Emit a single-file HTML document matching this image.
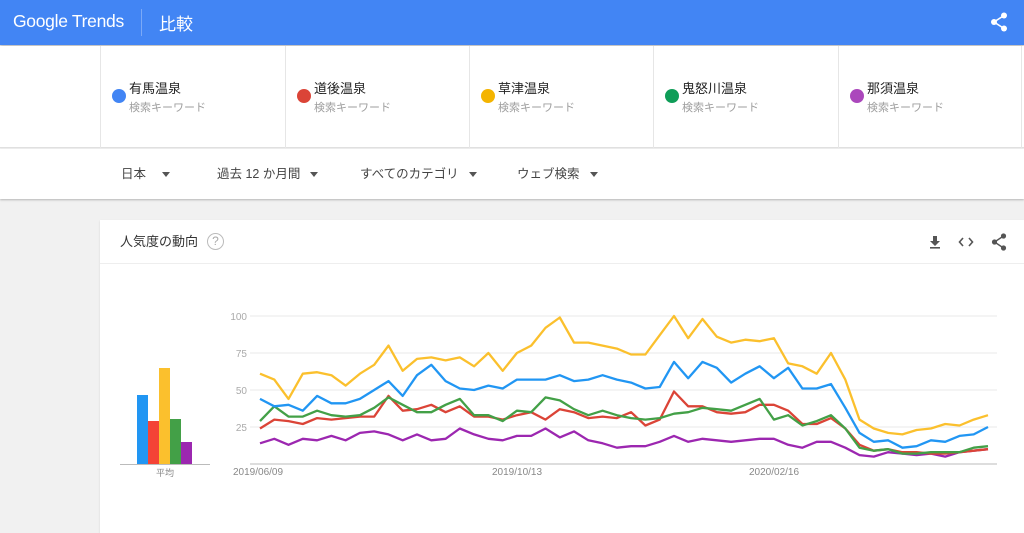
<!DOCTYPE html>
<html><head><meta charset="utf-8">
<style>
*{margin:0;padding:0;box-sizing:border-box}
body{width:1024px;height:533px;overflow:hidden;background:#f1f1f1;font-family:"Liberation Sans","Noto Sans CJK JP",sans-serif;position:relative}
.hdr{position:absolute;left:0;top:0;width:1024px;height:45px;background:#4285f4;box-shadow:0 1px 3px rgba(0,0,0,.3)}
.logo{position:absolute;left:13px;top:11px;color:#fff;font-size:17.5px;letter-spacing:-0.3px}
.sep{position:absolute;left:141px;top:9px;width:1px;height:27px;background:rgba(255,255,255,.3)}
.ttl{position:absolute;left:159px;top:10px;color:#fff;font-size:17px}
.kw{position:absolute;left:0;top:46px;width:1024px;height:102px;background:#fff;border-bottom:1px solid #e0e0e0}
.kc{position:absolute;top:0;height:102px;border-left:1px solid #e6e6e6}
.dot{position:absolute;left:11px;top:43px;width:14px;height:14px;border-radius:50%}
.kn{position:absolute;left:28px;top:32px;font-size:13px;color:#222}
.ks{position:absolute;left:28px;top:53px;font-size:11px;color:#9e9e9e}
.flt{position:absolute;left:0;top:149px;width:1024px;height:50px;background:#fff;box-shadow:0 1px 2px rgba(0,0,0,.25)}
.f{position:absolute;top:14px;font-size:12.5px;color:#444}
.tri{display:inline-block;width:0;height:0;border-left:4px solid transparent;border-right:4px solid transparent;border-top:5px solid #555;vertical-align:middle;margin-left:10px}
.card{position:absolute;left:100px;top:220px;width:924px;height:313px;background:#fff;box-shadow:0 1px 2px rgba(0,0,0,.12)}
.ch{position:absolute;left:0;top:0;width:924px;height:44px;border-bottom:1px solid #eee}
.ct{position:absolute;left:20px;top:11px;font-size:13px;color:#333}
.q{position:absolute;left:107px;top:13px;width:17px;height:17px;border:1.5px solid #bbb;border-radius:50%;color:#aaa;font-size:12px;text-align:center;line-height:14px}
</style></head><body>
<div class="hdr">
<div class="logo">Google Trends</div><div class="sep"></div><div class="ttl">比較</div>
<svg style="position:absolute;left:990px;top:12px" width="18" height="20" viewBox="0 0 18 20"><g fill="#fff"><circle cx="14" cy="3.5" r="3"/><circle cx="4" cy="10" r="3"/><circle cx="14" cy="16.5" r="3"/></g><path d="M14 3.5L4 10L14 16.5" stroke="#fff" stroke-width="1.6" fill="none"/></svg>
</div>
<div class="kw">
<div class="kc" style="left:100px;width:185px"><div class="dot" style="background:#4285f4"></div><div class="kn">有馬温泉</div><div class="ks">検索キーワード</div></div>
<div class="kc" style="left:285px;width:184px"><div class="dot" style="background:#db4437"></div><div class="kn">道後温泉</div><div class="ks">検索キーワード</div></div>
<div class="kc" style="left:469px;width:184px"><div class="dot" style="background:#f4b400"></div><div class="kn">草津温泉</div><div class="ks">検索キーワード</div></div>
<div class="kc" style="left:653px;width:185px"><div class="dot" style="background:#0f9d58"></div><div class="kn">鬼怒川温泉</div><div class="ks">検索キーワード</div></div>
<div class="kc" style="left:838px;width:184px;border-right:1px solid #e6e6e6"><div class="dot" style="background:#ab47bc"></div><div class="kn">那須温泉</div><div class="ks">検索キーワード</div></div>
</div>
<div class="flt">
<div class="f" style="left:121px">日本<span class="tri" style="margin-left:16px"></span></div>
<div class="f" style="left:217px">過去 12 か月間<span class="tri"></span></div>
<div class="f" style="left:360px">すべてのカテゴリ<span class="tri"></span></div>
<div class="f" style="left:517px">ウェブ検索<span class="tri"></span></div>
</div>
<div class="card">
<div class="ch"><div class="ct">人気度の動向</div><div class="q">?</div>
<svg style="position:absolute;left:828px;top:15px" width="14" height="14" viewBox="0 0 14 14"><path d="M5 1h4v5h3L7 11 2 6h3z" fill="#555"/><rect x="2" y="12" width="10" height="1.6" fill="#555"/></svg>
<svg style="position:absolute;left:858px;top:15px" width="16" height="14" viewBox="0 0 16 14"><path d="M5 3L1.5 7 5 11M11 3l3.5 4L11 11" stroke="#555" stroke-width="1.6" fill="none"/></svg>
<svg style="position:absolute;left:891px;top:13px" width="16" height="18" viewBox="0 0 16 18"><g fill="#555"><circle cx="12.5" cy="3" r="2.6"/><circle cx="3.5" cy="9" r="2.6"/><circle cx="12.5" cy="15" r="2.6"/></g><path d="M12.5 3L3.5 9l9 6" stroke="#555" stroke-width="1.4" fill="none"/></svg>
</div>
</div>
<svg id="ch" style="position:absolute;left:0;top:0" width="1024" height="533"></svg>
<script>
var s='';
var Y=function(v){return 464-v*1.48};
[[100,'100'],[75,'75'],[50,'50'],[25,'25']].forEach(function(g){var y=Y(g[0]);s+='<line x1="250" x2="997" y1="'+y+'" y2="'+y+'" stroke="#e8e8e8"/>';s+='<text x="247" y="'+(y+4)+'" text-anchor="end" font-size="10" fill="#aaa" font-family="Liberation Sans">'+g[1]+'</text>'});
s+='<line x1="250" x2="997" y1="464" y2="464" stroke="#bbb"/>';
s+='<text x="233" y="475" font-size="10" fill="#888" font-family="Liberation Sans">2019/06/09</text>';
s+='<text x="492" y="475" font-size="10" fill="#888" font-family="Liberation Sans">2019/10/13</text>';
s+='<text x="749" y="475" font-size="10" fill="#888" font-family="Liberation Sans">2020/02/16</text>';
s+='<line x1="120" x2="210" y1="464.5" y2="464.5" stroke="#bbb"/>';
s+='<text x="165" y="476" text-anchor="middle" font-size="9" fill="#888" font-family="Liberation Sans,Noto Sans CJK JP,sans-serif">平均</text>';
[[137,395,'#2196f3'],[148,421,'#f44336'],[159,368,'#fbc02d'],[170,419,'#43a047'],[181,442,'#9c27b0']].forEach(function(b){s+='<rect x="'+b[0]+'" y="'+b[1]+'" width="11" height="'+(464-b[1])+'" fill="'+b[2]+'"/>'});
var D={
'#9c27b0':[14,17,13,17,16,19,16,21,22,20,16,20,16,17,24,20,17,16,19,19,24,18,22,16,14,11,12,12,15,19,15,17,16,15,16,17,17,13,11,15,15,11,6,5,8,7,6,7,5,8,9,10],
'#db4437':[24,30,29,27,31,30,31,32,32,46,36,37,40,35,39,32,32,30,33,35,30,37,35,31,32,31,35,26,30,49,39,39,35,34,35,40,40,36,27,27,31,24,13,9,10,8,8,7,7,8,9,10],
'#43a047':[29,39,32,32,36,33,32,33,38,45,40,35,35,40,44,33,33,29,36,35,45,43,37,33,36,33,31,30,31,34,35,38,37,36,40,44,30,33,26,29,33,24,11,9,10,7,7,8,8,8,11,12],
'#2196f3':[44,39,40,36,46,41,41,44,50,56,46,60,67,56,51,50,53,51,57,57,57,60,56,57,60,57,55,51,52,69,58,69,65,55,61,66,58,65,51,51,54,38,21,15,16,11,12,16,15,19,20,25],
'#fbc02d':[61,57,44,61,62,60,53,61,67,80,63,71,72,70,72,66,75,63,75,80,92,99,82,82,80,78,74,74,87,100,85,98,86,82,84,83,85,68,66,61,75,57,30,24,21,20,23,24,27,26,30,33]};
for(var c in D){var a=D[c],p=[];for(var i=0;i<a.length;i++)p.push((260+i*728/(a.length-1)).toFixed(1)+','+Y(a[i]).toFixed(1));s+='<polyline points="'+p.join(' ')+'" fill="none" stroke="'+c+'" stroke-width="2.3" stroke-linejoin="round"/>'}
document.getElementById('ch').innerHTML=s;
</script>
</body></html>
